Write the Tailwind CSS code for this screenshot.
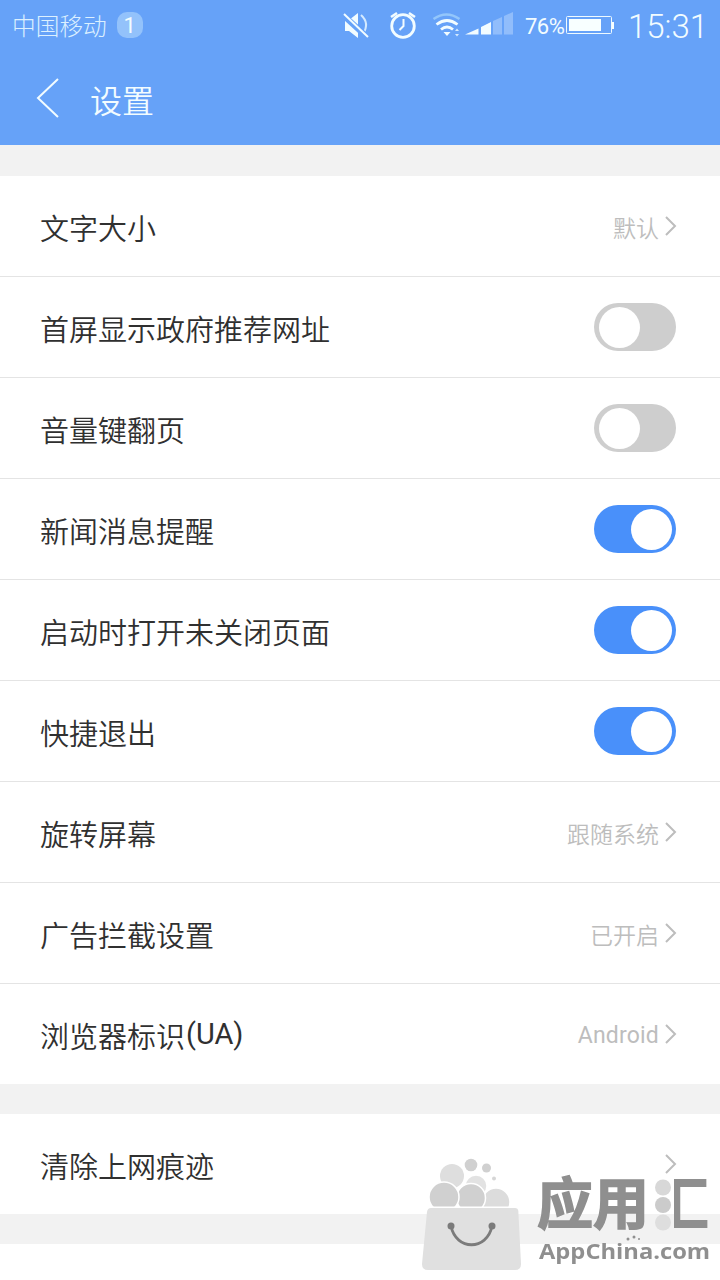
<!DOCTYPE html>
<html lang="zh-CN">
<head>
<meta charset="utf-8">
<title>设置</title>
<script src="https://cdn.jsdelivr.net/npm/@tailwindcss/browser@4"></script>
</head>
<body class="bg-[#f2f2f2]">
<div class="relative w-[720px] h-[1280px] overflow-hidden bg-[#f2f2f2] font-[Roboto,'Noto_Sans_CJK_SC',sans-serif] font-[350] text-[#303030]">
  <header class="h-[145px] bg-[#66a2f8] text-[#f2fcff]">
    <div class="h-[50px] flex items-center pl-3 pr-[14px]">
      <span class="text-[23.7px] leading-[50px] pt-[3px] text-[#dcf0ff] font-light">中国移动</span>
      <span class="ml-[10px] w-[26px] h-[26px] rounded-[10px] bg-[#93c2fb] flex items-center justify-center text-[22px] font-normal">1</span>
      <svg class="ml-auto shrink-0" width="176" height="50" viewBox="340 0 176 50" fill="none" stroke="#f2fcff">
        <path d="M345 20h4l9-7v25l-9-7h-4z" fill="#f2fcff" stroke="none"/>
        <path d="M361 15q9 8 2 19" stroke-width="2" stroke="#d4eaff"/>
        <path d="M343 15l24 22" stroke="#66a2f8" stroke-width="6"/>
        <path d="M344 14l24 23" stroke-width="2"/>
        <circle cx="403" cy="26" r="11.3" stroke-width="2.8"/>
        <path d="M403.500 19v7l-4 4" stroke-width="2"/>
        <path d="M391 17l6-4M409 13l6 4" stroke-width="2.500"/>
        <path d="M433.500 19q13-9 26 0" stroke="#93c6fb" stroke-width="2.500"/>
        <path d="M436.500 24.500q10.500-8 21 0M441 29.500q6-5 12 0" stroke-width="2.800"/>
        <path d="M443.500 32h7l-3.500 4z" fill="#f2fcff" stroke="none"/>
        <path d="M455 31l2-2.500 2 2.500zM455 34h4l-2 2.500z" fill="#d4eaff" stroke="none"/>
        <path d="M465 34.500l13.500-6v6zM481 27l10-5v12.500H481z" fill="#f2fcff" stroke="none"/>
        <path d="M493 21l9-4v17.500h-9zM504 16l9-4v22.500h-9z" fill="#91bdfb" stroke="none"/>
      </svg>
      <span class="ml-[9px] w-[40px] text-[22px] font-normal tracking-[-0.5px] leading-[50px] pt-[3px] whitespace-nowrap">76%</span>
      <svg class="shrink-0" width="49" height="50" viewBox="565 0 49 50">
        <rect x="566.500" y="16.500" width="45" height="17" rx="1" fill="none" stroke="#eefaff"/>
        <path d="M569 19h32v12h-32zM612 22h3v7h-3z" fill="#f8ffff"/>
      </svg>
      <span class="ml-[14px] w-[78px] text-[33px] leading-[50px] pt-[3px] font-light whitespace-nowrap text-right">15:31</span>
    </div>
    <div class="h-[95px] flex items-center pl-[36px]">
      <svg width="24" height="40" viewBox="0 0 24 40" fill="none" stroke="#f2fcff" stroke-width="2"><path d="M22 1L2 20l20 19"/></svg>
      <h1 class="ml-[30px] text-[32px] leading-[40px] pt-[8px]">设置</h1>
    </div>
  </header>

  <main>
    <section class="mt-[31px] bg-white">
      <div class="h-[101px] border-b border-[#e4e4e4] flex items-center justify-between pl-[40px] pr-[43px]">
        <span class="text-[29px] leading-[40px] pt-[8px]">文字大小</span>
        <span class="flex items-center gap-[6px] text-[23px] leading-[32px] text-[#bdbdbd]"><span class="pt-[7px]">默认</span><svg width="12" height="20" viewBox="0 0 12 20" fill="none" stroke="#bdbdbd" stroke-width="2"><path d="M1 1l9 9-9 9"/></svg></span>
      </div>
      <div class="h-[101px] border-b border-[#e4e4e4] flex items-center justify-between pl-[40px] pr-[44px]">
        <span class="text-[29px] leading-[40px] pt-[8px]">首屏显示政府推荐网址</span>
        <span class="w-[82px] h-[48px] rounded-full bg-[#cecece] flex items-center pl-[5px]"><span class="size-[41px] rounded-full bg-white"></span></span>
      </div>
      <div class="h-[101px] border-b border-[#e4e4e4] flex items-center justify-between pl-[40px] pr-[44px]">
        <span class="text-[29px] leading-[40px] pt-[8px]">音量键翻页</span>
        <span class="w-[82px] h-[48px] rounded-full bg-[#cecece] flex items-center pl-[5px]"><span class="size-[41px] rounded-full bg-white"></span></span>
      </div>
      <div class="h-[101px] border-b border-[#e4e4e4] flex items-center justify-between pl-[40px] pr-[44px]">
        <span class="text-[29px] leading-[40px] pt-[8px]">新闻消息提醒</span>
        <span class="w-[82px] h-[48px] rounded-full bg-[#4990fa] flex items-center justify-end pr-[4px]"><span class="size-[41px] rounded-full bg-white"></span></span>
      </div>
      <div class="h-[101px] border-b border-[#e4e4e4] flex items-center justify-between pl-[40px] pr-[44px]">
        <span class="text-[29px] leading-[40px] pt-[8px]">启动时打开未关闭页面</span>
        <span class="w-[82px] h-[48px] rounded-full bg-[#4990fa] flex items-center justify-end pr-[4px]"><span class="size-[41px] rounded-full bg-white"></span></span>
      </div>
      <div class="h-[101px] border-b border-[#e4e4e4] flex items-center justify-between pl-[40px] pr-[44px]">
        <span class="text-[29px] leading-[40px] pt-[8px]">快捷退出</span>
        <span class="w-[82px] h-[48px] rounded-full bg-[#4990fa] flex items-center justify-end pr-[4px]"><span class="size-[41px] rounded-full bg-white"></span></span>
      </div>
      <div class="h-[101px] border-b border-[#e4e4e4] flex items-center justify-between pl-[40px] pr-[43px]">
        <span class="text-[29px] leading-[40px] pt-[8px]">旋转屏幕</span>
        <span class="flex items-center gap-[6px] text-[23px] leading-[32px] text-[#bdbdbd]"><span class="pt-[7px]">跟随系统</span><svg width="12" height="20" viewBox="0 0 12 20" fill="none" stroke="#bdbdbd" stroke-width="2"><path d="M1 1l9 9-9 9"/></svg></span>
      </div>
      <div class="h-[101px] border-b border-[#e4e4e4] flex items-center justify-between pl-[40px] pr-[43px]">
        <span class="text-[29px] leading-[40px] pt-[8px]">广告拦截设置</span>
        <span class="flex items-center gap-[6px] text-[23px] leading-[32px] text-[#bdbdbd]"><span class="pt-[7px]">已开启</span><svg width="12" height="20" viewBox="0 0 12 20" fill="none" stroke="#bdbdbd" stroke-width="2"><path d="M1 1l9 9-9 9"/></svg></span>
      </div>
      <div class="h-[100px] flex items-center justify-between pl-[40px] pr-[43px]">
        <span class="flex text-[29px] leading-[40px]"><span class="pt-[8px]">浏览器标识</span><span class="ml-px font-normal pt-[4px]">(UA)</span></span>
        <span class="flex items-center gap-[6px] text-[23px] leading-[32px] text-[#bdbdbd]"><span class="pt-[4px] font-normal tracking-[0.2px]">Android</span><svg width="12" height="20" viewBox="0 0 12 20" fill="none" stroke="#bdbdbd" stroke-width="2"><path d="M1 1l9 9-9 9"/></svg></span>
      </div>
    </section>
    <section class="mt-[30px] h-[100px] bg-white flex items-center justify-between pl-[40px] pr-[43px]">
      <span class="text-[29px] leading-[40px] pt-[8px]">清除上网痕迹</span>
      <svg width="12" height="20" viewBox="0 0 12 20" fill="none" stroke="#bdbdbd" stroke-width="2"><path d="M1 1l9 9-9 9"/></svg>
    </section>
    <section class="mt-[30px] h-[36px] bg-white"></section>
  </main>

  <!-- AppChina watermark -->
  <div class="absolute left-[410px] top-[1140px] w-[310px] h-[140px] text-[#8f8f8f]">
    <svg class="absolute inset-0" width="310" height="140" viewBox="0 0 310 140">
      <circle cx="42" cy="36" r="12" fill="#dedede"/>
      <circle cx="61" cy="25" r="6.300" fill="#d0d0d0"/>
      <circle cx="76.500" cy="28" r="4.500" fill="#d0d0d0"/>
      <circle cx="84" cy="38.500" r="2" fill="#d6d6d6"/>
      <g stroke="#fff" stroke-width="1.500">
        <circle cx="66" cy="46" r="11" fill="#e2e2e2"/>
        <circle cx="86" cy="62" r="14" fill="#dcdcdc"/>
        <circle cx="61" cy="58" r="14.500" fill="#d0d0d0"/>
        <circle cx="34" cy="57" r="15" fill="#d0d0d0"/>
      </g>
      <path d="M18 66.500h93V74H18z" fill="#fff"/>
      <path d="M21 68h84q3 0 3.300 3l2.700 53q0 6-6 6H18q-6 0-6-6l5-52q.5-4 4-4z" fill="#e0e0e0"/>
      <path d="M41 86c5 25 36 25 41 0" fill="none" stroke="#7b7b7b" stroke-width="2.800"/>
      <circle cx="41" cy="86" r="3.500" fill="#7b7b7b"/><circle cx="82" cy="86" r="3.500" fill="#7b7b7b"/>
      <circle cx="253" cy="47.500" r="8" fill="#d8d8d8"/><circle cx="253" cy="65" r="8" fill="#cbcbcb"/><circle cx="253" cy="82.500" r="8" fill="#dedede"/>
      <circle cx="218" cy="99" r="1.500" fill="#8f8f8f"/><circle cx="224" cy="97" r="1.500" fill="#8f8f8f"/><circle cx="229" cy="99" r="1" fill="#8f8f8f"/>
    </svg>
    <span class="absolute left-[127px] top-[35px] text-[56px] leading-[60px] font-bold [-webkit-text-stroke:1.5px_#8f8f8f] whitespace-nowrap">应用</span>
    <!-- the three dots stand in for the left part of this character -->
    <span class="absolute left-[243px] top-[35px] text-[56px] leading-[60px] font-black text-transparent bg-clip-text bg-[linear-gradient(90deg,transparent_37%,#8f8f8f_37%)]">汇</span>
    <span class="absolute left-[129px] top-[96px] text-[22px] leading-[28px] font-bold font-['Open_Sans',sans-serif] origin-left scale-x-[1.078] whitespace-nowrap">AppChina.com</span>
  </div>
</div>
</body>
</html>
